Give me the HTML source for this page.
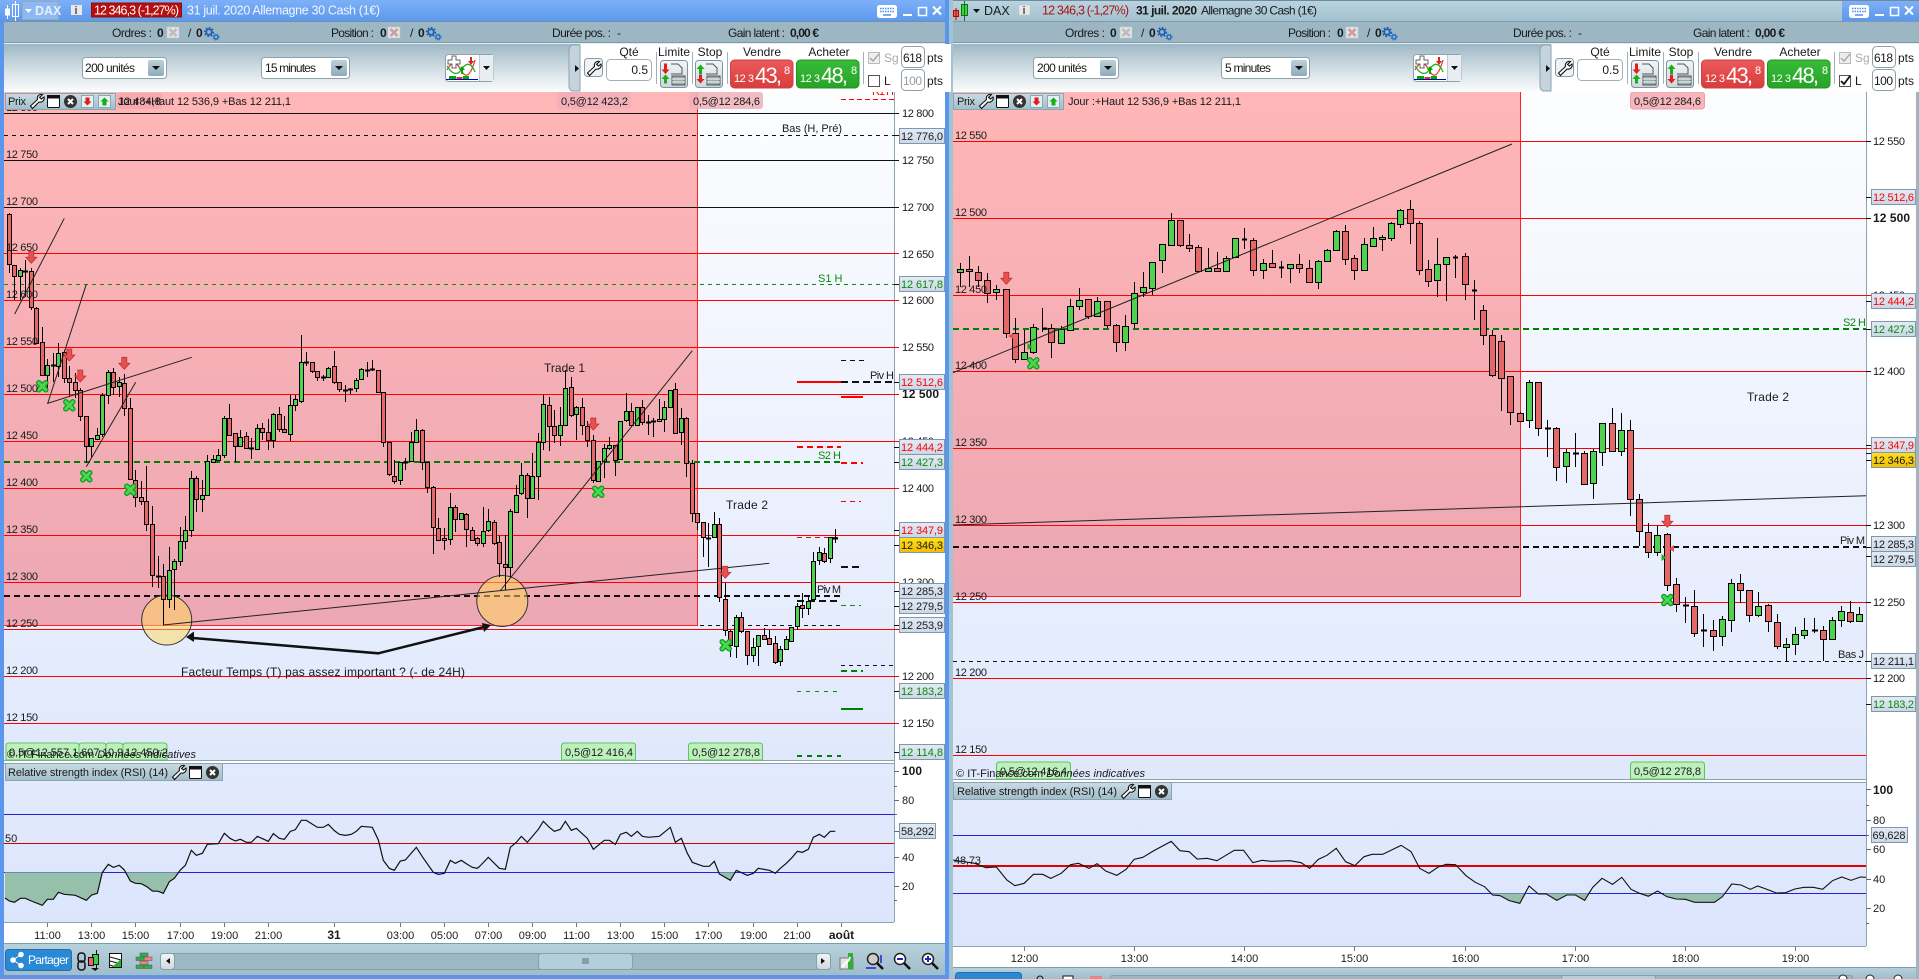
<!DOCTYPE html>
<html lang="fr"><head><meta charset="utf-8"><title>DAX</title>
<style>
html,body{margin:0;padding:0;background:#9cb8c4;overflow:hidden}
svg{display:block}
text{font-family:"Liberation Sans",sans-serif;font-size:11px;fill:#1a1a1a}
.b{font-weight:bold}
.r{fill:#f00}.g{fill:#0a8a0a}
.w{fill:#fff}
.ui{font-size:12px}
.big{font-size:22px;fill:#fff}
.sm{font-size:11px;fill:#fff}
</style></head><body>
<svg xmlns="http://www.w3.org/2000/svg" width="1919" height="979" viewBox="0 0 1919 979">
<defs>
<linearGradient id="tb" x1="0" y1="0" x2="0" y2="1"><stop offset="0" stop-color="#7db0f8"/><stop offset="1" stop-color="#5b97ec"/></linearGradient>
<linearGradient id="tb2" x1="0" y1="0" x2="0" y2="1"><stop offset="0" stop-color="#b9d3df"/><stop offset="1" stop-color="#a2c0ce"/></linearGradient>
<linearGradient id="tool" x1="0" y1="0" x2="0" y2="1"><stop offset="0" stop-color="#9db7c4"/><stop offset=".55" stop-color="#d5e0e6"/><stop offset="1" stop-color="#fbfcfd"/></linearGradient>
<linearGradient id="ch" x1="0" y1="0" x2="0" y2="1"><stop offset="0" stop-color="#fcfdff"/><stop offset="1" stop-color="#e0e8fc"/></linearGradient>
<linearGradient id="rs" x1="0" y1="0" x2="0" y2="1"><stop offset="0" stop-color="#e3eafd"/><stop offset="1" stop-color="#dbe5fc"/></linearGradient>
<linearGradient id="pk" x1="0" y1="0" x2="0" y2="1"><stop offset="0" stop-color="#ffb6b6"/><stop offset="1" stop-color="#eca8b4"/></linearGradient>
<linearGradient id="hd" x1="0" y1="0" x2="0" y2="1"><stop offset="0" stop-color="#c8dbe4"/><stop offset="1" stop-color="#a3bdc9"/></linearGradient>
<linearGradient id="box" x1="0" y1="0" x2="0" y2="1"><stop offset="0" stop-color="#e3ebf5"/><stop offset="1" stop-color="#cbd7e6"/></linearGradient>
<linearGradient id="yb" x1="0" y1="0" x2="0" y2="1"><stop offset="0" stop-color="#ffdf20"/><stop offset="1" stop-color="#f2bd00"/></linearGradient>
<linearGradient id="bt" x1="0" y1="0" x2="0" y2="1"><stop offset="0" stop-color="#f2f5f7"/><stop offset="1" stop-color="#cdd9df"/></linearGradient>
<linearGradient id="dd" x1="0" y1="0" x2="0" y2="1"><stop offset="0" stop-color="#bcd0da"/><stop offset="1" stop-color="#8fabb9"/></linearGradient>
<linearGradient id="bot" x1="0" y1="0" x2="0" y2="1"><stop offset="0" stop-color="#b8d2dd"/><stop offset="1" stop-color="#a0bdca"/></linearGradient>
<linearGradient id="rb" x1="0" y1="0" x2="0" y2="1"><stop offset="0" stop-color="#ec5a5a"/><stop offset="1" stop-color="#d83c3c"/></linearGradient>
<linearGradient id="gb" x1="0" y1="0" x2="0" y2="1"><stop offset="0" stop-color="#38bc38"/><stop offset="1" stop-color="#27a327"/></linearGradient>
<g id="wr"><path d="M13.5 1.5a4 4 0 0 0-5 5L1.5 13l2 2.5L10 9a4 4 0 0 0 5-5l-2.5 2-2-1.5z" fill="#fff" stroke="#111" stroke-width="1.1"/></g>
<g id="win"><rect x=".5" y=".5" width="12" height="12" rx="1" fill="#fff" stroke="#111"/><rect x="0" y="0" width="13" height="3.5" fill="#111"/></g>
<g id="cl"><circle cx="6.5" cy="6.5" r="6.5" fill="#333"/><path d="M4 4l5 5M9 4l-5 5" stroke="#fff" stroke-width="2"/></g>
<g id="dn"><rect x=".5" y=".5" width="12" height="12" fill="#e4eff5" stroke="#8aa"/><path d="M4.5 2.5h4v4h2l-4 4-4-4h2z" fill="#e01c1c"/></g>
<g id="up"><rect x=".5" y=".5" width="12" height="12" fill="#e4eff5" stroke="#8aa"/><path d="M4.5 10.5h4v-4h2l-4-4-4 4h2z" fill="#12b012"/></g>
<g id="gear"><circle cx="5" cy="5" r="2.800" fill="none" stroke="#1e5fb4" stroke-width="1.800"/><circle cx="5" cy="5" r="4.400" fill="none" stroke="#1e5fb4" stroke-width="1.500" stroke-dasharray="1.700 1.700"/><circle cx="12" cy="10" r="1.900" fill="none" stroke="#2a72c4" stroke-width="1.400"/><circle cx="12" cy="10" r="3" fill="none" stroke="#2a72c4" stroke-width="1.100" stroke-dasharray="1.200 1.200"/></g>
<g id="xb"><rect width="12" height="11" fill="#dfe3e5" stroke="#c4c9cc" stroke-width=".5"/><path d="M2.500 2l7 7M9.500 2l-7 7" stroke="#bcbcbc" stroke-width="2.500"/></g>
<g id="xr"><rect width="12" height="11" fill="#dfe3e5" stroke="#c4c9cc" stroke-width=".5"/><path d="M2.500 2l7 7M9.500 2l-7 7" stroke="#cf9aa0" stroke-width="2.500"/></g>
<g id="arr"><path d="M-2.5-6h5v6h3L0 6-5.500 0h3z" fill="#e65050" stroke="#c43030" stroke-width=".8"/></g>
<g id="cross"><path d="M-3.500-3.500l7 7M3.500-3.500l-7 7" stroke="#0f9a1e" stroke-width="5.500" stroke-linecap="round"/><path d="M-3.500-3.500l7 7M3.500-3.500l-7 7" stroke="#48d850" stroke-width="3" stroke-linecap="round"/></g>
<g id="kbd"><rect width="20" height="13" rx="2.500" fill="#fff"/><path d="M3 3.500h14M3 6.500h14" stroke="#4f8ee8" stroke-width="1.500" stroke-dasharray="1.500 1"/><path d="M6 10h8" stroke="#4f8ee8" stroke-width="1.500"/></g>
<g id="ctl"><path d="M0 10h9" stroke="#fff" stroke-width="2"/><rect x="15.500" y="2.500" width="8" height="8" fill="none" stroke="#fff" stroke-width="1.500"/><path d="M30 1.500l8 8M38 1.500l-8 8" stroke="#fff" stroke-width="2"/></g>
<g id="ind"><rect x=".5" y=".5" width="48" height="27" rx="3" fill="#fff" stroke="#8fa2ac"/><path d="M34.500.5v27" stroke="#8fa2ac"/><rect x="34.500" y="1" width="14" height="26" fill="#e7edf0"/><path d="M2 16c5-10 10-8 14 0s9 8 14-10" fill="none" stroke="#d33" stroke-width="1.200"/><path d="M2 12c5 8 10 10 14 4s9-10 14 2" fill="none" stroke="#2a2" stroke-width="1.200"/><path d="M4 22h7v4H4zM18 22h6v4h-6z" fill="#0a0"/><path d="M11.500 23h6v3h-6z" fill="#d33"/><path d="M1 25.500h32" stroke="#00c"/><path d="M3 6h4V2h4v4h4v4h-4v4H7v-4H3z" fill="#fff" stroke="#666"/><path d="M16 20v-4h-2l3-4 3 4h-2v4z" fill="#0a0"/><path d="M25 3v4h-2l3 4 3-4h-2V3z" fill="#d22"/><path d="M38 12h7l-3.500 4z" fill="#111"/></g>
<g id="trade">
<path d="M0 0h373v48H0z" fill="#fff"/>
<path d="M-8 1h8v46H-8c-2-1-3-3-3-5V7c0-3 1-5 3-6z" fill="#c5d4dc" stroke="#8ba4b1"/>
<path d="M-5 21l4 3.500-4 3.500z" fill="#111"/>
<rect x="4.500" y="14.500" width="18" height="18" rx="3" fill="#eef2f4" stroke="#8a9aa2"/>
<rect x="26.500" y="15.500" width="45" height="21" rx="4" fill="#fff" stroke="#a1b0b8"/>
<path d="M76.500 8v32M112.500 8v32M147.500 8v32M283.500 8v32" stroke="#9fb1ba"/>
<rect x="80.500" y="16.500" width="27" height="27" rx="3" fill="url(#bt)" stroke="#7e939d"/>
<path d="M84 19.500h3v6h2.500l-4 4.500-4-4.500H84z" fill="#e02020"/><path d="M84 39.500h3v-4.500h2.500l-4-4.500-4 4.500H84z" fill="#18b018"/>
<path d="M91 20h7l4 4v6H91" fill="none" stroke="#555"/><path d="M92 32h13v9H92z" fill="#9aa" stroke="#555"/><path d="M92 35h13M92 38h13" stroke="#fff"/>
<rect x="115.500" y="16.500" width="27" height="27" rx="3" fill="url(#bt)" stroke="#7e939d"/>
<path d="M119 30h3v-5h2.500l-4-4.500-4 4.500H119z" fill="#18b018"/><path d="M119 30.500h3v4.500h2.500l-4 4.500-4-4.500H119z" fill="#e02020"/>
<path d="M126 20h7l4 4v6H126" fill="none" stroke="#555"/><path d="M127 32h13v9H127z" fill="#9aa" stroke="#555"/><path d="M127 35h13M127 38h13" stroke="#fff"/>
<rect x="150.500" y="16" width="62.500" height="28" rx="4" fill="url(#rb)" stroke="#c44"/>
<rect x="216.500" y="16" width="62.500" height="28" rx="4" fill="url(#gb)" stroke="#1f931f"/>
<rect x="321.500" y="2.500" width="23" height="21" rx="4" fill="#fff" stroke="#8fa0a8"/>
<rect x="321.500" y="25.500" width="23" height="21" rx="4" fill="#fff" stroke="#8fa0a8"/>
<rect x="288.500" y="8.500" width="11" height="11" fill="#eee" stroke="#bbb"/>
<path d="M290 14l3 3 6-7" fill="none" stroke="#aaa" stroke-width="1.500"/>
<rect x="288.500" y="31.500" width="11" height="11" fill="#fff" stroke="#555"/>
</g>
</defs>

<!-- LEFT WINDOW frame -->
<rect width="952" height="979" fill="#5a97ec"/>
<rect x="4" y="22" width="941" height="953" fill="#9cb7c3"/>
<rect width="951" height="22" fill="url(#tb)"/>
<rect x="4" y="44" width="941" height="48" fill="url(#tool)"/>
<path d="M4 21.500h941" stroke="#6e93a8"/><path d="M4 43.500h941" stroke="#e3edf1"/><path d="M4 42.500h941" stroke="#7f9aa8"/>
<rect x="945" y="0" width="4" height="979" fill="#5a97ec"/><rect x="949" y="0" width="3" height="979" fill="#a3c3d3"/>
<!-- chart -->
<rect x="4" y="92" width="941" height="851" fill="#fff"/>
<rect x="4" y="92" width="890" height="668" fill="url(#ch)"/>
<rect x="4" y="92" width="693" height="533" fill="url(#pk)"/>
<path d="M697.500 92v533.500H4" fill="none" stroke="#f22" />
<rect x="4" y="763" width="890" height="159" fill="url(#rs)"/>
<path d="M4 760.500h890M4 763.500h890M4 922.500h890M894.500 92v830" stroke="#8da3af" fill="none"/>

<!-- left levels -->
<path d="M4 113.500H894M4 160.500H894M4 207.500H894" stroke="#111" fill="none"/>
<path d="M4 253.500H899M4 300.500H899M4 347.500H899M4 394.500H899M4 441.500H899M4 488.500H899M4 535.500H899M4 582.500H899M4 629.500H899M4 676.500H899M4 723.500H899" stroke="#f00" fill="none" shape-rendering="crispEdges"/>
<path d="M4 135.500H894" stroke="#111" stroke-dasharray="4 4"/>
<path d="M4 284.500H894" stroke="#0a8a0a" stroke-dasharray="4 4"/>
<path d="M4 462H841" stroke="#008000" stroke-width="2" stroke-dasharray="6 4"/>
<path d="M4 596H841" stroke="#111" stroke-width="2" stroke-dasharray="6 4"/>
<path d="M700 625.500H841" stroke="#111" stroke-dasharray="4 4"/>
<path d="M841 99.500H894" stroke="#f00" stroke-dasharray="5 3"/>
<path d="M841 360.500H865" stroke="#111" stroke-dasharray="5 4"/>
<path d="M797 382H841" stroke="#f00" stroke-width="2"/>
<path d="M841 382H895" stroke="#111" stroke-width="2" stroke-dasharray="7 4"/>
<path d="M841 397H863" stroke="#f00" stroke-width="2"/>
<path d="M797 447H841" stroke="#f00" stroke-width="2" stroke-dasharray="6 4"/>
<path d="M841 463H863" stroke="#f00" stroke-width="2" stroke-dasharray="6 4"/>
<path d="M841 501.500H861" stroke="#f00" stroke-dasharray="5 4"/>
<path d="M797 537.500H841" stroke="#f00" stroke-dasharray="5 4"/>
<path d="M841 567H863" stroke="#111" stroke-width="2" stroke-dasharray="7 4"/>
<path d="M797 601H841" stroke="#111" stroke-width="2" stroke-dasharray="7 4"/>
<path d="M841 605.500H861" stroke="#0a8a0a" stroke-dasharray="5 4"/>
<path d="M841 665.500H893" stroke="#111" stroke-dasharray="4 4"/>
<path d="M841 671H863" stroke="#008000" stroke-width="2" stroke-dasharray="6 4"/>
<path d="M797 691.500H841" stroke="#0a8a0a" stroke-dasharray="4 5"/>
<path d="M841 709H863" stroke="#008000" stroke-width="2"/>
<path d="M797 756H841" stroke="#008000" stroke-width="2" stroke-dasharray="5 5"/>
<text x="872" y="95" class="r" textLength="22">R1 H</text>
<!-- circles -->
<circle cx="166.700" cy="620" r="25" fill="#ffd75a" fill-opacity=".5" stroke="#333"/>
<circle cx="502.300" cy="601" r="25.500" fill="#ffd75a" fill-opacity=".5" stroke="#333"/>

<!-- left candles -->
<g shape-rendering="crispEdges">
<path stroke="#000" fill="none" d="M9.500 213V273M14.500 265V300M20.500 268V300M25.500 260V297M31.500 268V310M36.500 307V344M42.500 327V376M47.500 359V390M53.500 353V382M58.500 343V377M64.500 350V383M69.500 366V397M75.500 373V398M80.500 388V421M86.500 416V463M91.500 438V457M97.500 428V440M102.500 393V437M108.500 370V404M113.500 368V395M119.500 377V397M124.500 374V416M130.500 398V480M135.500 470V507M141.500 481V505M146.500 466V531M152.500 506V587M158.500 556V588M163.500 564V625M169.500 547V608M174.500 559V610M180.500 527V566M185.500 516V549M191.500 471V537M196.500 476V512M202.500 480V512M207.500 455V495M213.500 455V463M218.500 449V460M224.500 416V458M229.500 404V435M235.500 433V462M240.500 430V447M246.500 432V449M251.500 438V459M257.500 424V450M262.500 423V440M268.500 419V450M273.500 413V448M279.500 407V432M284.500 416V433M290.500 395V441M295.500 395V411M301.500 335V403M306.500 352V366M312.500 362V373M317.500 372V381M323.500 375V381M328.500 367V378M334.500 351V384M339.500 382V392M345.500 385V402M350.500 388V394M356.500 378V392M361.500 368V380M367.500 362V377M372.500 360V371M378.500 370V393M383.500 392V447M389.500 442V476M394.500 460V484M400.500 462V485M405.500 458V470M411.500 432V462M416.500 419V443M422.500 429V470M427.500 462V493M433.500 486V554M438.500 518V541M444.500 528V550M450.500 493V545M455.500 505V532M461.500 513V520M466.500 513V547M472.500 527V541M477.500 537V546M483.500 507V547M488.500 509V532M494.500 520V545M499.500 536V577M505.500 535V590M510.500 509V577M516.500 485V513M521.500 463V495M527.500 473V518M532.500 453V499M538.500 433V500M543.500 395V450M549.500 397V451M554.500 410V443M560.500 407V446M565.500 370V426M571.500 377V417M576.500 406V440M582.500 398V435M587.500 421V447M593.500 435V483M598.500 461V481M604.500 444V478M609.500 437V450M615.500 445V476M620.500 421V460M626.500 393V422M631.500 403V427M637.500 407V426M642.500 400V425M648.500 415V435M653.500 418V437M659.500 399V422M664.500 401V432M670.500 390V408M675.500 383V434M681.500 408V445M686.500 417V477M692.500 460V522M697.500 513V530M703.500 522V557M708.500 523V567M714.500 512V538M719.500 518V602M725.500 583V636M730.500 630V657M736.500 615V658M741.500 612V633M747.500 632V665M753.500 638V662M758.500 635V666M764.500 628V640M769.500 630V644M775.500 636V664M780.500 646V666M786.500 636V650M791.500 627V642M797.500 603V630M802.500 593V618M808.500 595V615M813.500 552V600M819.500 547V565M824.500 548V563M830.500 537V563M835.500 529V543"/>
<path stroke="#000" stroke-width="2" d="M23 271.500h5M51 365.500h5M156 576.500h5M249 448.500h5M304 362.500h5M321 377.500h5M343 390.500h5M348 389.500h5M365 370.500h5M370 369.500h5M403 462.500h5M646 422.500h5M651 421.500h5M706 538.500h5M833 538.500h5"/>
<path stroke="#000" fill="#e56767" d="M7.500 214.500h4V264.500h-4zM12.500 265.500h4V276.500h-4zM29.500 271.500h4V307.500h-4zM34.500 308.500h4V343.500h-4zM40.500 342.500h4V375.500h-4zM62.500 352.500h4V378.500h-4zM67.500 378.500h4V382.500h-4zM73.500 382.500h4V390.500h-4zM78.500 390.500h4V416.500h-4zM84.500 416.500h4V446.500h-4zM111.500 372.500h4V387.500h-4zM122.500 383.500h4V408.500h-4zM128.500 408.500h4V479.500h-4zM133.500 480.500h4V497.500h-4zM139.500 497.500h4V501.500h-4zM144.500 501.500h4V524.500h-4zM150.500 524.500h4V575.500h-4zM161.500 576.500h4V599.500h-4zM194.500 478.500h4V499.500h-4zM227.500 418.500h4V435.500h-4zM233.500 433.500h4V446.500h-4zM244.500 436.500h4V448.500h-4zM260.500 428.500h4V432.500h-4zM266.500 432.500h4V440.500h-4zM277.500 414.500h4V429.500h-4zM282.500 429.500h4V432.500h-4zM310.500 362.500h4V371.500h-4zM315.500 371.500h4V377.500h-4zM332.500 366.500h4V382.500h-4zM337.500 382.500h4V389.500h-4zM376.500 370.500h4V392.500h-4zM381.500 392.500h4V442.500h-4zM387.500 442.500h4V474.500h-4zM392.500 476.500h4V481.500h-4zM420.500 430.500h4V462.500h-4zM425.500 462.500h4V487.500h-4zM431.500 487.500h4V527.500h-4zM436.500 528.500h4V540.500h-4zM442.500 538.500h4V540.500h-4zM453.500 507.500h4V519.500h-4zM464.500 514.500h4V529.500h-4zM470.500 530.500h4V540.500h-4zM475.500 538.500h4V543.500h-4zM492.500 522.500h4V543.500h-4zM497.500 542.500h4V563.500h-4zM503.500 564.500h4V567.500h-4zM525.500 475.500h4V498.500h-4zM547.500 405.500h4V426.500h-4zM552.500 426.500h4V435.500h-4zM569.500 387.500h4V415.500h-4zM580.500 407.500h4V425.500h-4zM585.500 426.500h4V440.500h-4zM591.500 440.500h4V480.500h-4zM613.500 445.500h4V460.500h-4zM629.500 411.500h4V425.500h-4zM640.500 407.500h4V422.500h-4zM673.500 389.500h4V433.500h-4zM684.500 418.500h4V463.500h-4zM690.500 463.500h4V513.500h-4zM695.500 513.500h4V522.500h-4zM701.500 522.500h4V537.500h-4zM717.500 524.500h4V597.500h-4zM723.500 599.500h4V630.500h-4zM728.500 631.500h4V645.500h-4zM739.500 617.500h4V631.500h-4zM745.500 631.500h4V655.500h-4zM762.500 635.500h4V639.500h-4zM767.500 638.500h4V644.500h-4zM773.500 643.500h4V662.500h-4zM800.500 605.500h4V608.500h-4zM822.500 553.500h4V561.500h-4z"/>
<path stroke="#000" fill="#4fd34f" d="M18.500 270.500h4V276.500h-4zM45.500 365.500h4V375.500h-4zM56.500 353.500h4V366.500h-4zM89.500 438.500h4V446.500h-4zM95.500 435.500h4V439.500h-4zM100.500 395.500h4V434.500h-4zM106.500 372.500h4V395.500h-4zM117.500 382.500h4V386.500h-4zM167.500 570.500h4V599.500h-4zM172.500 561.500h4V569.500h-4zM178.500 541.500h4V561.500h-4zM183.500 530.500h4V541.500h-4zM189.500 478.500h4V530.500h-4zM200.500 495.500h4V499.500h-4zM205.500 461.500h4V495.500h-4zM211.500 459.500h4V462.500h-4zM216.500 455.500h4V460.500h-4zM222.500 418.500h4V455.500h-4zM238.500 437.500h4V446.500h-4zM255.500 428.500h4V449.500h-4zM271.500 414.500h4V440.500h-4zM288.500 405.500h4V434.500h-4zM293.500 399.500h4V405.500h-4zM299.500 362.500h4V401.500h-4zM326.500 368.500h4V377.500h-4zM354.500 380.500h4V388.500h-4zM359.500 369.500h4V379.500h-4zM398.500 462.500h4V480.500h-4zM409.500 442.500h4V461.500h-4zM414.500 430.500h4V442.500h-4zM448.500 507.500h4V539.500h-4zM459.500 513.500h4V519.500h-4zM481.500 531.500h4V543.500h-4zM486.500 521.500h4V530.500h-4zM508.500 511.500h4V567.500h-4zM514.500 495.500h4V512.500h-4zM519.500 475.500h4V493.500h-4zM530.500 476.500h4V498.500h-4zM536.500 442.500h4V476.500h-4zM541.500 404.500h4V442.500h-4zM558.500 425.500h4V435.500h-4zM563.500 388.500h4V425.500h-4zM574.500 407.500h4V414.500h-4zM596.500 461.500h4V481.500h-4zM602.500 448.500h4V461.500h-4zM607.500 445.500h4V448.500h-4zM618.500 421.500h4V459.500h-4zM624.500 411.500h4V420.500h-4zM635.500 407.500h4V425.500h-4zM657.500 419.500h4V421.500h-4zM662.500 407.500h4V419.500h-4zM668.500 390.500h4V407.500h-4zM679.500 418.500h4V432.500h-4zM712.500 524.500h4V537.500h-4zM734.500 617.500h4V646.500h-4zM751.500 647.500h4V655.500h-4zM756.500 635.500h4V646.500h-4zM778.500 649.500h4V661.500h-4zM784.500 639.500h4V649.500h-4zM789.500 627.500h4V641.500h-4zM795.500 606.500h4V626.500h-4zM806.500 601.500h4V608.500h-4zM811.500 561.500h4V599.500h-4zM817.500 552.500h4V560.500h-4zM828.500 537.500h4V558.500h-4z"/>
</g>
<!-- left trendlines -->
<g stroke="#222" fill="none" stroke-width="1">
<path d="M14.700 314L64.300 218.300M86.300 284.300L47.700 403.300L191.700 357.300M86.300 466.700L135.700 382.300M163.300 625L769.300 563.300M500 591L692.300 350.700"/>
<path d="M193 638L378.300 653.300L484 627" stroke="#111" stroke-width="2.500"/>
</g>
<path d="M186 637l8-5.500v10.500zM491 625l-9-2 2 9z" fill="#111"/>
<!-- markers -->
<use href="#arr" x="31.300" y="257.300"/><use href="#arr" x="69.300" y="355"/><use href="#arr" x="80.300" y="376"/><use href="#arr" x="124.300" y="363.300"/><use href="#arr" x="593.300" y="424"/><use href="#arr" x="725.300" y="572.300"/>
<use href="#cross" x="42.300" y="386.300"/><use href="#cross" x="69.300" y="405.300"/><use href="#cross" x="86.300" y="476.300"/><use href="#cross" x="130.300" y="489.700"/><use href="#cross" x="598.300" y="491.700"/><use href="#cross" x="725.700" y="645.300"/>
<!-- left chart text -->
<g>
<text x="6" y="111" textLength="32">12 800</text>
<text x="6" y="158" textLength="32">12 750</text><text x="6" y="205" textLength="32">12 700</text><text x="6" y="251" textLength="32">12 650</text><text x="6" y="298" textLength="32">12 600</text><text x="6" y="345" textLength="32">12 550</text><text x="6" y="392" textLength="32">12 500</text><text x="6" y="439" textLength="32">12 450</text><text x="6" y="486" textLength="32">12 400</text><text x="6" y="533" textLength="32">12 350</text><text x="6" y="580" textLength="32">12 300</text><text x="6" y="627" textLength="32">12 250</text><text x="6" y="674" textLength="32">12 200</text><text x="6" y="721" textLength="32">12 150</text>
<text x="782" y="132" textLength="60">Bas (H, Pré)</text>
<text x="818" y="282" class="g">S1 H</text>
<text x="870" y="379" textLength="24">Piv H</text>
<text x="818" y="459" class="g" textLength="23">S2 H</text>
<text x="817" y="593" textLength="24">Piv M</text>
<text x="544" y="372" textLength="41" style="font-size:12px">Trade 1</text>
<text x="726" y="509" textLength="42" style="font-size:12px">Trade 2</text>
<text x="181" y="676" textLength="284" style="font-size:12px">Facteur Temps (T) pas assez important ? (- de 24H)</text>
</g>
<!-- left tags -->
<rect x="117" y="93" width="45" height="16" rx="3" fill="#f4a8ae" opacity=".8"/>
<rect x="557" y="92" width="74" height="17" rx="3" fill="#f0b0b8" opacity=".85"/>
<rect x="689" y="92" width="74" height="17" rx="3" fill="#f0b0b8" opacity=".85"/>
<text x="561" y="105" textLength="67">0,5@12 423,2</text><text x="693" y="105" textLength="67">0,5@12 284,6</text>
<text x="118" y="105">12 484,8</text><text x="118" y="105" textLength="173">Jour :+Haut 12 536,9 +Bas 12 211,1</text>
<g fill="#bdf0bd" stroke="#5ec45e"><path d="M6 760v-14q0-3 3-3h67q3 0 3 3v14z"/><path d="M79 760v-14q0-3 3-3h21q3 0 3 3v14z"/><path d="M106 760v-14q0-3 3-3h11q3 0 3 3v14z"/><path d="M123 760v-14q0-3 3-3h38q3 0 3 3v14z"/><path d="M561.500 760v-14q0-3 3-3h68q3 0 3 3v14z"/><path d="M688.500 760v-14q0-3 3-3h68q3 0 3 3v14z"/></g>
<text x="9" y="756">0,5@12 557,1</text><text x="81" y="756">607,1</text><text x="108" y="756">0,9</text><text x="125" y="756">12 450,2</text>
<text x="565" y="756" textLength="68">0,5@12 416,4</text><text x="692" y="756" textLength="68">0,5@12 278,8</text>
<text x="7" y="758" textLength="189">© IT-Finance.com <tspan font-style="italic">Données indicatives</tspan></text>
<!-- Prix header -->
<rect x="5.500" y="93.500" width="110" height="16" fill="url(#hd)" stroke="#8ba4b1"/>
<text x="8" y="105" textLength="18" style="font-size:11px">Prix</text>
<use href="#wr" x="29" y="93"/><use href="#win" x="47" y="95"/><use href="#cl" x="64" y="95"/><use href="#dn" x="81" y="95"/><use href="#up" x="98" y="95"/>
<!-- left axis -->
<path d="M894 113.500h5M894 160.500h5M894 207.500h5M894 135.500h5M894 284.500h5M894 382.500h5M894 447.500h5M894 462.500h5M894 530.500h5M894 545.500h5M894 591.500h5M894 606.500h5M894 625.500h5M894 691.500h5M894 752.500h5" stroke="#111"/>
<g>
<text x="902" y="117" textLength="32">12 800</text><text x="902" y="164" textLength="32">12 750</text><text x="902" y="211" textLength="32">12 700</text><text x="902" y="258" textLength="32">12 650</text><text x="902" y="304" textLength="32">12 600</text><text x="902" y="351" textLength="32">12 550</text><text x="902" y="398" class="b" textLength="37" style="font-size:12px">12 500</text><text x="902" y="445" textLength="32">12 450</text><text x="902" y="492" textLength="32">12 400</text><text x="902" y="586" textLength="32">12 300</text><text x="902" y="680" textLength="32">12 200</text><text x="902" y="727" textLength="32">12 150</text>
</g>
<g fill="url(#box)" stroke="#7f97a8">
<rect x="899.500" y="128.500" width="45" height="15"/><rect x="899.500" y="276.500" width="45" height="15"/><rect x="899.500" y="374.500" width="45" height="15"/><rect x="899.500" y="439.500" width="45" height="15"/><rect x="899.500" y="454.500" width="45" height="15"/><rect x="899.500" y="522.500" width="45" height="15"/><rect x="899.500" y="583.500" width="45" height="15"/><rect x="899.500" y="598.500" width="45" height="15"/><rect x="899.500" y="617.500" width="45" height="15"/><rect x="899.500" y="683.500" width="45" height="15"/><rect x="899.500" y="744.500" width="45" height="15"/>
<rect x="899.500" y="537.500" width="45" height="15" fill="url(#yb)"/>
</g>
<text x="901" y="140" textLength="42">12 776,0</text><text x="901" y="288" textLength="42" class="g">12 617,8</text><text x="901" y="386" textLength="42" class="r">12 512,6</text><text x="901" y="451" textLength="42" class="r">12 444,2</text><text x="901" y="466" textLength="42" class="g">12 427,3</text><text x="901" y="534" textLength="42" class="r">12 347,9</text><text x="901" y="549" textLength="42">12 346,3</text><text x="901" y="595" textLength="42">12 285,3</text><text x="901" y="610" textLength="42">12 279,5</text><text x="901" y="629" textLength="42">12 253,9</text><text x="901" y="695" textLength="42" class="g">12 183,2</text><text x="901" y="756" textLength="42" class="g">12 114,8</text>

<!-- LEFT RSI -->
<path d="M4 814.500H894M4 872.500H894" stroke="#2222dd" fill="none"/>
<path d="M4 843.500H894" stroke="#d00000" fill="none"/>
<g transform="translate(0 760) scale(.33333)">
<path d="M15 337V414L28 423 43 427 61 415 76 415 94 423 127 436 142 418 160 418 175 397 193 403 226 406 259 421 275 405 292 400 307 337zM378 337L391 363 406 370 424 371 442 381 457 393 475 394 490 400 508 365 523 355 535 337z" fill="#97c0ab"/>
<path fill="none" stroke="#111" stroke-width="3.600" d="M15 414L28 423 43 427 61 415 76 415 94 423 127 436 142 418 160 418 175 397 193 403 226 406 259 421 275 405 292 400 307 337 325 313 340 322 358 316 373 330 391 363 406 370 424 371 442 381 457 393 475 394 490 400 508 365 523 355 541 330 556 316 574 271 589 286 607 280 622 253 655 251 673 220 690 235 706 243 721 238 739 247 754 247 772 229 805 244 820 221 838 235 853 238 871 214 886 209 904 181 919 181 952 202 970 202 985 193 1003 212 1018 223 1036 226 1054 223 1069 214 1084 199 1117 202 1135 240 1150 301 1168 325 1183 331 1201 303 1216 300 1249 262 1267 290 1300 337 1315 343 1333 340 1351 301 1366 310 1384 301 1402 313 1417 322 1432 325 1440 318"/>
</g>
<g transform="translate(480 640) scale(.33333)">
<path d="M718 697L718 702 751 721 763 697z" fill="#97c0ab"/>
<path fill="none" stroke="#111" stroke-width="3.600" d="M0 678L25 652 58 685 76 688 91 622 109 607 124 589 142 607 175 568 190 544 208 562 223 574 241 568 256 544 274 571 289 565 322 595 340 628 373 601 388 601 406 613 421 583 439 577 454 589 472 574 487 589 505 592 538 589 571 562 586 607 604 595 622 640 637 667 670 679 688 679 703 664 718 702 751 721 769 691 802 706 820 700 835 685 868 691 886 700 901 685 919 670 934 655 952 634 967 637 985 628 1000 592 1018 583 1033 592 1051 574 1066 574"/>
</g>
<text x="5" y="842">50</text>
<rect x="5.500" y="763.500" width="217" height="17" fill="url(#hd)" stroke="#8ba4b1"/>
<text x="8" y="776" textLength="160">Relative strength index (RSI) (14)</text>
<use href="#wr" x="171" y="764"/><use href="#win" x="189" y="766"/><use href="#cl" x="206" y="766"/>
<path d="M894 771.500h5M894 786.500h3M894 800.500h5M894 814.500h3M894 831.500h5M894 857.500h5M894 886.500h5M894 900.500h3" stroke="#667"/>
<text x="902" y="775" class="b" style="font-size:12px">100</text><text x="902" y="804">80</text><text x="902" y="861">40</text><text x="902" y="890">20</text>
<rect x="899.500" y="823.500" width="36" height="15" fill="url(#box)" stroke="#7f97a8"/><text x="901" y="835" textLength="33">58,292</text>
<!-- left x axis -->
<path d="M47.500 923v4M91.500 923v4M135.500 923v4M180.500 923v4M224.500 923v4M268.500 923v4M334.500 923v4M400.500 923v4M444.500 923v4M488.500 923v4M532.500 923v4M576.500 923v4M620.500 923v4M664.500 923v4M708.500 923v4M753.500 923v4M797.500 923v4M841.500 923v4" stroke="#778"/>
<g text-anchor="middle">
<text x="47.500" y="939">11:00</text><text x="91.500" y="939">13:00</text><text x="135.500" y="939">15:00</text><text x="180.500" y="939">17:00</text><text x="224.500" y="939">19:00</text><text x="268.500" y="939">21:00</text><text x="334" y="939" class="b" style="font-size:12px">31</text><text x="400.500" y="939">03:00</text><text x="444.500" y="939">05:00</text><text x="488.500" y="939">07:00</text><text x="532.500" y="939">09:00</text><text x="576.500" y="939">11:00</text><text x="620.500" y="939">13:00</text><text x="664.500" y="939">15:00</text><text x="708.500" y="939">17:00</text><text x="753.500" y="939">19:00</text><text x="797" y="939">21:00</text><text x="841.500" y="939" class="b" style="font-size:12px">août</text>
</g>
<!-- left bottom bar -->
<rect x="4" y="943" width="941" height="32" fill="url(#bot)"/><path d="M4 943.500h941" stroke="#7f9aa8"/>
<rect x="5.500" y="949.500" width="66" height="21" rx="3" fill="#2a89d4" stroke="#1f70b0"/>
<circle cx="13" cy="960" r="2.800" fill="#fff"/><circle cx="21" cy="954.500" r="2.800" fill="#fff"/><circle cx="21" cy="965.500" r="2.800" fill="#fff"/><path d="M13 960l8-5.500M13 960l8 5.500" stroke="#fff"/>
<text x="28" y="964" class="w" textLength="41" style="font-size:12px">Partager</text>
<rect x="78" y="953" width="7" height="9" rx="3" fill="none" stroke="#111" stroke-width="1.500"/><rect x="78" y="961" width="7" height="9" rx="3" fill="none" stroke="#111" stroke-width="1.500"/>
<path d="M96.500 950v20" stroke="#111"/><rect x="92.500" y="954.500" width="6" height="10" fill="#3ed03e" stroke="#111"/><rect x="88.500" y="957.500" width="5" height="8" fill="#e56767" stroke="#111"/><path d="M91 968h8l-4 3z" fill="#111"/>
<rect x="109.500" y="953.500" width="12" height="14" fill="#fff" stroke="#111"/><path d="M110 957l11 3M110 961l11 3M110 965l5 2" stroke="#111"/><path d="M112 967l9-8v8z" fill="#2fae2f"/>
<g fill="#e98585" stroke="#555" stroke-width=".5"><rect x="140" y="953" width="8" height="3.500" fill="#2cae48"/><rect x="144" y="957" width="8" height="3.500"/><rect x="136" y="957" width="8" height="3.500" fill="#2cae48"/><rect x="140" y="961" width="8" height="3.500"/><rect x="136" y="965" width="8" height="3.500" fill="#2cae48"/><rect x="144" y="965" width="8" height="3.500" fill="#2cae48"/></g>
<rect x="160.500" y="953.500" width="670" height="16" rx="3" fill="#9cb8c4" stroke="#86a1ae"/>
<rect x="160.500" y="953.500" width="14" height="16" rx="3" fill="url(#bt)" stroke="#86a1ae"/><path d="M170 958v6l-4-3z" fill="#111"/>
<rect x="816.500" y="953.500" width="14" height="16" rx="3" fill="url(#bt)" stroke="#86a1ae"/><path d="M821 958v6l4-3z" fill="#111"/>
<rect x="538.500" y="953.500" width="94" height="16" rx="3" fill="#b2cfdb" stroke="#86a1ae"/><path d="M582 959h7M582 961h7M582 963h7" stroke="#667"/>
<rect x="840" y="958" width="13" height="11" fill="#e3e3e3" stroke="#777"/><path d="M848 953h5v16h-5z" fill="#2fae2f"/><path d="M842 967l7-7 1-3" stroke="#fff" stroke-width="2" fill="none"/>
<circle cx="873" cy="959" r="5.500" fill="#ccc" stroke="#222" stroke-width="1.500"/><path d="M877 963l6 6" stroke="#111" stroke-width="2.500"/><path d="M866 968h10M881 955v8" stroke="#22c" stroke-width="1.500"/>
<circle cx="900" cy="959" r="5.500" fill="#fff" stroke="#222" stroke-width="1.500"/><path d="M904 963l6 6" stroke="#111" stroke-width="2.500"/><path d="M897 959h6" stroke="#22c" stroke-width="2"/>
<circle cx="928" cy="959" r="5.500" fill="#fff" stroke="#222" stroke-width="1.500"/><path d="M932 963l6 6" stroke="#111" stroke-width="2.500"/><path d="M925 959h6M928 956v6" stroke="#22c" stroke-width="2"/>
<rect x="4" y="975" width="945" height="4" fill="#5a97ec"/>

<!-- LEFT header text -->
<g>
<rect x="5" y="8.500" width="5" height="7" fill="#fff"/><rect x="12.500" y="4.500" width="6" height="12" fill="none" stroke="#fff"/><path d="M7.500 5v14M15.500 1v20" stroke="#fff"/>
<rect x="22.500" y="1.500" width="36" height="18" fill="#8cb8f4" stroke="#93a8b8"/><path d="M25 9h7l-3.500 4z" fill="#fff"/>
<text x="35" y="15" class="b" style="font-size:12.500px;fill:#e8f0fb">DAX</text>
<rect x="71" y="5" width="11" height="10" fill="#e8e8e8"/><text x="74.500" y="14" class="b" style="fill:#555">i</text>
<rect x="91.500" y="3" width="90" height="14" fill="#b50f0f" stroke="#8c1010"/>
<text x="94" y="14.500" class="w" textLength="85" style="font-size:12.500px">12 346,3 (-1,27%)</text>
<text x="187" y="14.500" class="w" textLength="193" style="font-size:12.500px;fill:#f1f6ff">31 juil. 2020 Allemagne 30 Cash (1€)</text>
<use href="#kbd" x="877" y="5"/><use href="#ctl" x="903" y="5"/>
<text x="112" y="37" textLength="40" class="ui">Ordres :</text><text x="157" y="37" class="b ui">0</text><use href="#xb" x="167" y="27"/><text x="188" y="37" class="ui">/</text><text x="196" y="37" class="b ui">0</text><use href="#gear" x="204" y="27"/>
<text x="331" y="37" textLength="43" class="ui">Position :</text><text x="380" y="37" class="b ui">0</text><use href="#xr" x="388" y="27"/><text x="410" y="37" class="ui">/</text><text x="418" y="37" class="b ui">0</text><use href="#gear" x="426" y="27"/>
<text x="552" y="37" textLength="59" class="ui">Durée pos. :</text><text x="617" y="37" class="ui">-</text>
<text x="728" y="37" textLength="57" class="ui">Gain latent :</text><text x="790" y="37" textLength="29" class="b ui">0,00 €</text>
<rect x="82.500" y="57.500" width="84" height="21" rx="3" fill="#fff" stroke="#8fa2ac"/><rect x="148" y="60" width="16" height="16" rx="2" fill="url(#dd)"/><path d="M152 66h8l-4 4z" fill="#111"/>
<text x="85" y="72" textLength="50" class="ui">200 unités</text>
<rect x="261.500" y="57.500" width="88" height="21" rx="3" fill="#fff" stroke="#8fa2ac"/><rect x="331" y="60" width="16" height="16" rx="2" fill="url(#dd)"/><path d="M335 66h8l-4 4z" fill="#111"/>
<text x="265" y="72" textLength="51" class="ui">15 minutes</text>
<use href="#ind" x="445" y="54"/>
<use href="#trade" x="580" y="44"/><use href="#wr" x="586" y="60"/>
<text x="629" y="56" text-anchor="middle" class="ui">Qté</text><text x="648" y="74" text-anchor="end" class="ui">0.5</text>
<text x="674" y="56" text-anchor="middle" class="ui">Limite</text><text x="710" y="56" text-anchor="middle" class="ui">Stop</text>
<text x="762" y="56" text-anchor="middle" class="ui">Vendre</text><text x="829" y="56" text-anchor="middle" class="ui">Acheter</text>
<text x="734" y="82" class="sm" textLength="20">12 3</text><text x="755" y="83" class="big" textLength="27">43,</text><text x="784" y="74" class="sm">8</text>
<text x="800" y="82" class="sm" textLength="20">12 3</text><text x="821" y="83" class="big" textLength="27">48,</text><text x="851" y="74" class="sm">8</text>
<text x="884" y="62" class="ui" style="fill:#aaa">Sg</text><text x="884" y="85" class="ui">L</text>
<text x="903" y="62" textLength="19" class="ui">618</text><text x="903" y="85" textLength="19" class="ui" style="fill:#999">100</text>
<text x="927" y="62" class="ui">pts</text><text x="927" y="85" class="ui">pts</text>
</g>

<!-- RIGHT WINDOW -->
<rect x="951" y="0" width="968" height="979" fill="#9cb7c3"/>
<rect x="951" y="1" width="968" height="21" fill="url(#tb2)"/>
<path d="M951 .5h968" stroke="#6f8a99"/>
<rect x="1842" y="1" width="77" height="20" fill="url(#tb)"/>
<rect x="953" y="44" width="963" height="48" fill="url(#tool)"/>
<path d="M953 21.500h966" stroke="#7f9aa8"/><path d="M953 43.500h966" stroke="#e3edf1"/><path d="M953 42.500h966" stroke="#7f9aa8"/>
<rect x="951" y="0" width="2" height="979" fill="#a3c3d3"/>
<rect x="953" y="92" width="963" height="875" fill="#fff"/>
<rect x="953" y="92" width="913" height="687" fill="url(#ch)"/>
<rect x="953" y="92" width="567" height="504" fill="url(#pk)"/>
<path d="M1520.500 92v504.500H953" fill="none" stroke="#f22"/>
<rect x="953" y="782" width="913" height="164" fill="url(#rs)"/>
<path d="M953 779.500h913M953 782.500h913M953 946.500h913M1866.500 92v854" stroke="#8da3af" fill="none"/>
<rect x="1916" y="44" width="3" height="935" fill="#9cb7c3"/>
<path d="M953 141.500H1871M953 218.500H1871M953 295.500H1871M953 371.500H1871M953 448.500H1871M953 525.500H1871M953 602.500H1871M953 678.500H1871M953 755.500H1866" stroke="#f00" fill="none" shape-rendering="crispEdges"/>
<path d="M953 329H1866" stroke="#008000" stroke-width="2" stroke-dasharray="6 4"/>
<path d="M953 547H1866" stroke="#111" stroke-width="2" stroke-dasharray="6 4"/>
<path d="M953 661.500H1866" stroke="#111" stroke-dasharray="4 4"/>

<g shape-rendering="crispEdges">
<path stroke="#000" fill="none" d="M960.500 263V287M969.500 256V287M978.500 266V287M987.500 273V303M996.500 285V300M1006.500 289V338M1015.500 318V363M1024.500 330V360M1033.500 324V354M1042.500 308V332M1051.500 324V358M1061.500 326V344M1070.500 299V331M1079.500 288V310M1088.500 299V319M1097.500 297V317M1107.500 301V328M1116.500 324V352M1125.500 315V351M1134.500 282V328M1143.500 272V297M1152.500 262V295M1162.500 244V273M1171.500 213V246M1180.500 220V247M1189.500 234V252M1198.500 245V272M1208.500 248V272M1217.500 252V272M1226.500 256V272M1235.500 238V258M1244.500 228V249M1253.500 238V276M1263.500 259V279M1272.500 250V268M1281.500 261V278M1290.500 264V283M1299.500 254V273M1309.500 260V283M1318.500 260V289M1327.500 249V262M1336.500 230V251M1345.500 225V265M1354.500 255V280M1364.500 238V271M1373.500 227V247M1382.500 235V251M1391.500 222V241M1400.500 209V228M1410.500 200V244M1419.500 221V275M1428.500 260V287M1437.500 238V297M1446.500 257V301M1455.500 255V278M1465.500 253V300M1474.500 280V320M1483.500 305V345M1492.500 330V377M1501.500 335V411M1510.500 376V425M1520.500 412V422M1529.500 380V428M1538.500 382V436M1547.500 420V457M1556.500 427V481M1566.500 449V483M1575.500 433V467M1584.500 451V485M1593.500 449V499M1602.500 423V466M1612.500 408V452M1621.500 413V456M1630.500 420V516M1639.500 494V546M1648.500 523V558M1657.500 526V556M1667.500 533V591M1676.500 578V612M1685.500 597V623M1694.500 590V637M1703.500 614V647M1713.500 620V651M1722.500 616V646M1731.500 579V632M1740.500 574V603M1749.500 590V622M1758.500 592V617M1768.500 604V632M1777.500 614V649M1786.500 638V661M1795.500 627V655M1804.500 618V639M1814.500 618V633M1823.500 626V661M1832.500 617V640M1841.500 606V627M1850.500 601V623M1859.500 607V622"/>
<path stroke="#000" stroke-width="2" d="M1042 328.500h5M1242 239.500h5M1279 267.500h5M1453 257.500h5M1472 290.500h5M1545 428.500h6M1573 453.500h6M1683 605.500h6M1701 630.500h6M1812 630.500h6"/>
<path stroke="#000" fill="#e56767" d="M966.500 269.500h6V271.500h-6zM975.500 272.500h6V280.500h-6zM984.500 280.500h6V293.500h-6zM1003.500 289.500h6V333.500h-6zM1012.500 333.500h6V359.500h-6zM1048.500 328.500h6V342.500h-6zM1085.500 299.500h6V316.500h-6zM1104.500 301.500h6V325.500h-6zM1113.500 325.500h6V342.500h-6zM1177.500 220.500h6V245.500h-6zM1186.500 245.500h6V248.500h-6zM1195.500 247.500h6V271.500h-6zM1214.500 268.500h6V271.500h-6zM1250.500 240.500h6V270.500h-6zM1269.500 263.500h6V267.500h-6zM1296.500 264.500h6V268.500h-6zM1306.500 268.500h6V282.500h-6zM1342.500 231.500h6V259.500h-6zM1351.500 258.500h6V270.500h-6zM1407.500 209.500h6V223.500h-6zM1416.500 223.500h6V270.500h-6zM1425.500 269.500h6V281.500h-6zM1462.500 256.500h6V284.500h-6zM1480.500 310.500h6V335.500h-6zM1489.500 335.500h6V375.500h-6zM1498.500 341.500h6V378.500h-6zM1507.500 376.500h6V412.500h-6zM1517.500 413.500h6V421.500h-6zM1535.500 382.500h6V428.500h-6zM1553.500 428.500h6V467.500h-6zM1581.500 453.500h6V484.500h-6zM1609.500 423.500h6V451.500h-6zM1627.500 430.500h6V499.500h-6zM1636.500 499.500h6V531.500h-6zM1645.500 532.500h6V552.500h-6zM1664.500 534.500h6V585.500h-6zM1673.500 584.500h6V604.500h-6zM1691.500 606.500h6V633.500h-6zM1710.500 630.500h6V636.500h-6zM1737.500 583.500h6V590.500h-6zM1746.500 590.500h6V615.500h-6zM1765.500 605.500h6V621.500h-6zM1774.500 622.500h6V646.500h-6zM1820.500 630.500h6V639.500h-6zM1847.500 612.500h6V621.500h-6z"/>
<path stroke="#000" fill="#4fd34f" d="M957.500 269.500h6V272.500h-6zM993.500 289.500h6V292.500h-6zM1021.500 352.500h6V359.500h-6zM1030.500 327.500h6V352.500h-6zM1058.500 329.500h6V343.500h-6zM1067.500 306.500h6V330.500h-6zM1076.500 300.500h6V306.500h-6zM1094.500 301.500h6V316.500h-6zM1122.500 326.500h6V342.500h-6zM1131.500 293.500h6V323.500h-6zM1140.500 287.500h6V292.500h-6zM1149.500 262.500h6V288.500h-6zM1159.500 244.500h6V260.500h-6zM1168.500 220.500h6V245.500h-6zM1205.500 268.500h6V271.500h-6zM1223.500 258.500h6V271.500h-6zM1232.500 238.500h6V257.500h-6zM1260.500 263.500h6V270.500h-6zM1287.500 264.500h6V268.500h-6zM1315.500 261.500h6V282.500h-6zM1324.500 250.500h6V261.500h-6zM1333.500 231.500h6V250.500h-6zM1361.500 244.500h6V270.500h-6zM1370.500 238.500h6V246.500h-6zM1379.500 237.500h6V239.500h-6zM1388.500 223.500h6V238.500h-6zM1397.500 210.500h6V224.500h-6zM1434.500 264.500h6V280.500h-6zM1443.500 257.500h6V264.500h-6zM1526.500 382.500h6V420.500h-6zM1563.500 452.500h6V466.500h-6zM1590.500 451.500h6V483.500h-6zM1599.500 423.500h6V452.500h-6zM1618.500 430.500h6V451.500h-6zM1654.500 535.500h6V552.500h-6zM1719.500 619.500h6V636.500h-6zM1728.500 583.500h6V620.500h-6zM1755.500 606.500h6V615.500h-6zM1783.500 644.500h6V647.500h-6zM1792.500 634.500h6V644.500h-6zM1801.500 630.500h6V635.500h-6zM1829.500 620.500h6V639.500h-6zM1838.500 611.500h6V620.500h-6zM1856.500 614.500h6V621.500h-6z"/>
</g>
<path d="M953 372.700L1512 144M953 525L1866 495.700" stroke="#222" fill="none"/>
<use href="#arr" x="1006.300" y="278.300"/><use href="#arr" x="1667.300" y="521.300"/>
<use href="#cross" x="1033.300" y="363.300"/><use href="#cross" x="1667.300" y="600"/>
<path d="M1008 336l5-3v6zM1674 545v7l-5-3.500z" fill="#e65050"/>
<path d="M1027.500 343l5 3.500-5 3.500zM1661.500 554l5 3.500-5 3.500z" fill="#22aa22"/>

<text x="955" y="216" textLength="32">12 500</text><text x="955" y="139" textLength="32">12 550</text><text x="955" y="293" textLength="32">12 450</text><text x="955" y="369" textLength="32">12 400</text><text x="955" y="446" textLength="32">12 350</text><text x="955" y="523" textLength="32">12 300</text><text x="955" y="600" textLength="32">12 250</text><text x="955" y="676" textLength="32">12 200</text><text x="955" y="753" textLength="32">12 150</text>
<text x="1843" y="326" class="g" textLength="23">S2 H</text><text x="1840" y="544" textLength="25">Piv M</text><text x="1838" y="658" textLength="26">Bas J</text>
<text x="1747" y="401" textLength="42" style="font-size:12px">Trade 2</text>

<rect x="1630.500" y="92" width="74" height="17" rx="3" fill="#f5b6bc" stroke="#eea0aa"/><text x="1634" y="105" textLength="67">0,5@12 284,6</text>
<g fill="#bdf0bd" stroke="#5ec45e"><path d="M996.500 779v-14q0-3 3-3h68q3 0 3 3v14z"/><path d="M1630.500 779v-14q0-3 3-3h68q3 0 3 3v14z"/></g>
<text x="1000" y="775" textLength="67">0,5@12 416,4</text><text x="1634" y="775" textLength="67">0,5@12 278,8</text>
<text x="956" y="777" textLength="189">© IT-Finance.com <tspan font-style="italic">Données indicatives</tspan></text>

<rect x="953.500" y="93.500" width="110" height="16" fill="url(#hd)" stroke="#8ba4b1"/>
<text x="957" y="105" textLength="18">Prix</text>
<use href="#wr" x="978" y="93"/><use href="#win" x="996" y="95"/><use href="#cl" x="1013" y="95"/><use href="#dn" x="1030" y="95"/><use href="#up" x="1047" y="95"/>
<text x="1068" y="105" textLength="173">Jour :+Haut 12 536,9 +Bas 12 211,1</text>

<!-- right axis -->
<path d="M1866 141.500h5M1866 197.500h5M1866 218.500h5M1866 301.500h5M1866 329.500h5M1866 371.500h5M1866 445.500h5M1866 453.500h5M1866 460.500h5M1866 525.500h5M1866 547.500h5M1866 556.500h5M1866 602.500h5M1866 661.500h5M1866 678.500h5M1866 704.500h5" stroke="#111"/>
<text x="1873" y="145" textLength="32">12 550</text><text x="1873" y="222" class="b" textLength="37" style="font-size:12px">12 500</text><text x="1873" y="299" textLength="32">12 450</text><text x="1873" y="375" textLength="32">12 400</text><text x="1873" y="529" textLength="32">12 300</text><text x="1873" y="606" textLength="32">12 250</text><text x="1873" y="682" textLength="32">12 200</text>
<g fill="url(#box)" stroke="#7f97a8">
<rect x="1871.500" y="189.500" width="44" height="15"/><rect x="1871.500" y="293.500" width="44" height="15"/><rect x="1871.500" y="321.500" width="44" height="15"/><rect x="1871.500" y="437.500" width="44" height="15"/><rect x="1871.500" y="536.500" width="44" height="15"/><rect x="1871.500" y="551.500" width="44" height="15"/><rect x="1871.500" y="653.500" width="44" height="15"/><rect x="1871.500" y="696.500" width="44" height="15"/>
<rect x="1871.500" y="452.500" width="44" height="15" fill="url(#yb)"/>
</g>
<text x="1873" y="201" textLength="41" class="r">12 512,6</text><text x="1873" y="305" textLength="41" class="r">12 444,2</text><text x="1873" y="333" textLength="41" class="g">12 427,3</text><text x="1873" y="449" textLength="41" class="r">12 347,9</text><text x="1873" y="464" textLength="41">12 346,3</text><text x="1873" y="548" textLength="41">12 285,3</text><text x="1873" y="563" textLength="41">12 279,5</text><text x="1873" y="665" textLength="41">12 211,1</text><text x="1873" y="708" textLength="41" class="g">12 183,2</text>

<!-- right RSI -->
<path d="M953 835.500H1866M953 893.500H1866" stroke="#2222dd" fill="none"/>
<path d="M953 866H1866" stroke="#e00000" stroke-width="2" fill="none"/>
<g transform="translate(950 720) scale(.618 .33333)">
<path d="M875 520L878 525 890 527 905 542 922 550 933 520zM950 520L952 522 965 522 982 541 998 525 1012 525 1027 541 1034 520zM1110 520L1116 520 1130 529 1140 520zM1155 520L1160 530 1175 537 1190 538 1205 547 1237 547 1250 530 1255 520z" fill="#97c0ab"/>
<path fill="none" stroke="#111" stroke-width="1.100" vector-effect="non-scaling-stroke" d="M5 420L40 430 58 443 75 441 92 480 105 497 120 490 135 463 150 463 163 475 180 460 195 434 208 430 225 445 238 431 252 453 270 466 285 448 298 418 312 412 330 392 358 364 372 392 387 395 400 417 416 415 432 422 460 391 475 391 490 428 505 421 520 424 550 422 568 428 582 445 596 418 610 406 625 385 640 425 655 437 670 410 683 403 700 403 730 376 746 395 760 445 775 460 790 441 803 433 818 434 835 467 850 487 865 500 878 525 890 527 905 542 922 550 937 498 952 522 965 522 982 541 998 525 1012 525 1027 541 1040 502 1055 475 1072 493 1087 472 1102 508 1116 520 1130 529 1145 513 1160 530 1175 537 1190 538 1205 547 1237 547 1250 530 1265 492 1280 495 1295 508 1307 498 1322 508 1337 519 1352 518 1367 507 1382 502 1397 502 1412 508 1428 482 1443 471 1458 481 1473 471 1482 472"/>
</g>
<text x="954" y="864" textLength="27">48,73</text>
<rect x="953.500" y="782.500" width="218" height="17" fill="url(#hd)" stroke="#8ba4b1"/>
<text x="957" y="795" textLength="160">Relative strength index (RSI) (14)</text>
<use href="#wr" x="1120" y="783"/><use href="#win" x="1138" y="785"/><use href="#cl" x="1155" y="785"/>
<path d="M1866 789.500h5M1866 805.500h3M1866 820.500h5M1866 835.500h3M1866 849.500h5M1866 879.500h5M1866 908.500h5M1866 923.500h3" stroke="#667"/>
<text x="1873" y="794" class="b" style="font-size:12px">100</text><text x="1873" y="824">80</text><text x="1873" y="853">60</text><text x="1873" y="883">40</text><text x="1873" y="912">20</text>
<rect x="1871.500" y="827.500" width="36" height="15" fill="url(#box)" stroke="#7f97a8"/><text x="1872.500" y="839" textLength="33">69,628</text>
<path d="M1024.500 946v5M1134.500 946v5M1244.500 946v5M1354.500 946v5M1465.500 946v5M1575.500 946v5M1685.500 946v5M1795.500 946v5" stroke="#778"/>
<g text-anchor="middle"><text x="1024.500" y="962">12:00</text><text x="1134.500" y="962">13:00</text><text x="1244.500" y="962">14:00</text><text x="1354.500" y="962">15:00</text><text x="1465.500" y="962">16:00</text><text x="1575.500" y="962">17:00</text><text x="1685.500" y="962">18:00</text><text x="1795.500" y="962">19:00</text></g>
<!-- right bottom bar -->
<rect x="953" y="967" width="963" height="12" fill="url(#bot)"/><path d="M953 967.500h963" stroke="#7f9aa8"/>
<rect x="955.500" y="972.500" width="66" height="10" rx="3" fill="#2a89d4" stroke="#1f70b0"/>
<rect x="1037" y="976" width="6" height="6" rx="3" fill="none" stroke="#111"/><rect x="1063" y="976" width="10" height="5" fill="#fff" stroke="#111"/><rect x="1090" y="976" width="12" height="5" fill="#e98585"/>
<rect x="1110.500" y="975.500" width="742" height="6" rx="2" fill="#9cb8c4" stroke="#86a1ae"/>
<rect x="1561.500" y="975.500" width="94" height="6" rx="2" fill="#b2cfdb" stroke="#86a1ae"/>
<circle cx="1843" cy="979" r="4" fill="#fff" stroke="#222"/><circle cx="1870" cy="979" r="4" fill="#fff" stroke="#222"/><circle cx="1898" cy="979" r="4" fill="#fff" stroke="#222"/>

<!-- right header -->
<rect x="953.500" y="10.500" width="5" height="6" fill="#e46363" stroke="#b00"/><path d="M956 8v12" stroke="#b00"/><rect x="961.500" y="4.500" width="6" height="11" fill="#3ed03e" stroke="#0a7a0a"/><path d="M964.500 1v20" stroke="#0a7a0a"/>
<path d="M973 9h7l-3.500 4z" fill="#111"/>
<text x="984" y="15" style="font-size:12.500px">DAX</text>
<rect x="1019" y="5" width="11" height="10" fill="#e8e8e8" stroke="#b8c4ca" stroke-width=".5"/><text x="1022.500" y="14" class="b" style="fill:#555">i</text>
<text x="1042" y="14.500" textLength="87" style="font-size:12.500px;fill:#a81616">12 346,3 (-1,27%)</text>
<text x="1136" y="14.500" class="b" textLength="61" style="font-size:12px">31 juil. 2020</text>
<text x="1201" y="14.500" textLength="116" style="font-size:12px">Allemagne 30 Cash (1€)</text>
<use href="#kbd" x="1849" y="5"/><use href="#ctl" x="1875" y="5"/>
<text x="1065" y="37" textLength="40" class="ui">Ordres :</text><text x="1110" y="37" class="b ui">0</text><use href="#xb" x="1120" y="27"/><text x="1141" y="37" class="ui">/</text><text x="1149" y="37" class="b ui">0</text><use href="#gear" x="1157" y="27"/>
<text x="1288" y="37" textLength="43" class="ui">Position :</text><text x="1337" y="37" class="b ui">0</text><use href="#xr" x="1346" y="27"/><text x="1367" y="37" class="ui">/</text><text x="1375" y="37" class="b ui">0</text><use href="#gear" x="1382" y="27"/>
<text x="1513" y="37" textLength="59" class="ui">Durée pos. :</text><text x="1578" y="37" class="ui">-</text>
<text x="1693" y="37" textLength="57" class="ui">Gain latent :</text><text x="1755" y="37" textLength="30" class="b ui">0,00 €</text>
<rect x="1033.500" y="57.500" width="85" height="21" rx="3" fill="#fff" stroke="#8fa2ac"/><rect x="1100" y="60" width="16" height="16" rx="2" fill="url(#dd)"/><path d="M1104 66h8l-4 4z" fill="#111"/>
<text x="1037" y="72" textLength="50" class="ui">200 unités</text>
<rect x="1221.500" y="57.500" width="88" height="21" rx="3" fill="#fff" stroke="#8fa2ac"/><rect x="1291" y="60" width="16" height="16" rx="2" fill="url(#dd)"/><path d="M1295 66h8l-4 4z" fill="#111"/>
<text x="1225" y="72" textLength="46" class="ui">5 minutes</text>
<use href="#ind" x="1413" y="54"/>
<use href="#trade" x="1551" y="44"/><use href="#wr" x="1557" y="60"/>
<path d="M1841 81l3 3 6-8" fill="none" stroke="#111" stroke-width="1.800"/>
<text x="1600" y="56" text-anchor="middle" class="ui">Qté</text><text x="1619" y="74" text-anchor="end" class="ui">0.5</text>
<text x="1645" y="56" text-anchor="middle" class="ui">Limite</text><text x="1681" y="56" text-anchor="middle" class="ui">Stop</text>
<text x="1733" y="56" text-anchor="middle" class="ui">Vendre</text><text x="1800" y="56" text-anchor="middle" class="ui">Acheter</text>
<text x="1705" y="82" class="sm" textLength="20">12 3</text><text x="1726" y="83" class="big" textLength="27">43,</text><text x="1755" y="74" class="sm">8</text>
<text x="1771" y="82" class="sm" textLength="20">12 3</text><text x="1792" y="83" class="big" textLength="27">48,</text><text x="1822" y="74" class="sm">8</text>
<text x="1855" y="62" class="ui" style="fill:#aaa">Sg</text><text x="1855" y="85" class="ui">L</text>
<text x="1874" y="62" textLength="19" class="ui">618</text><text x="1874" y="85" textLength="19" class="ui">100</text>
<text x="1898" y="62" class="ui">pts</text><text x="1898" y="85" class="ui">pts</text>
</svg>
</body></html>
